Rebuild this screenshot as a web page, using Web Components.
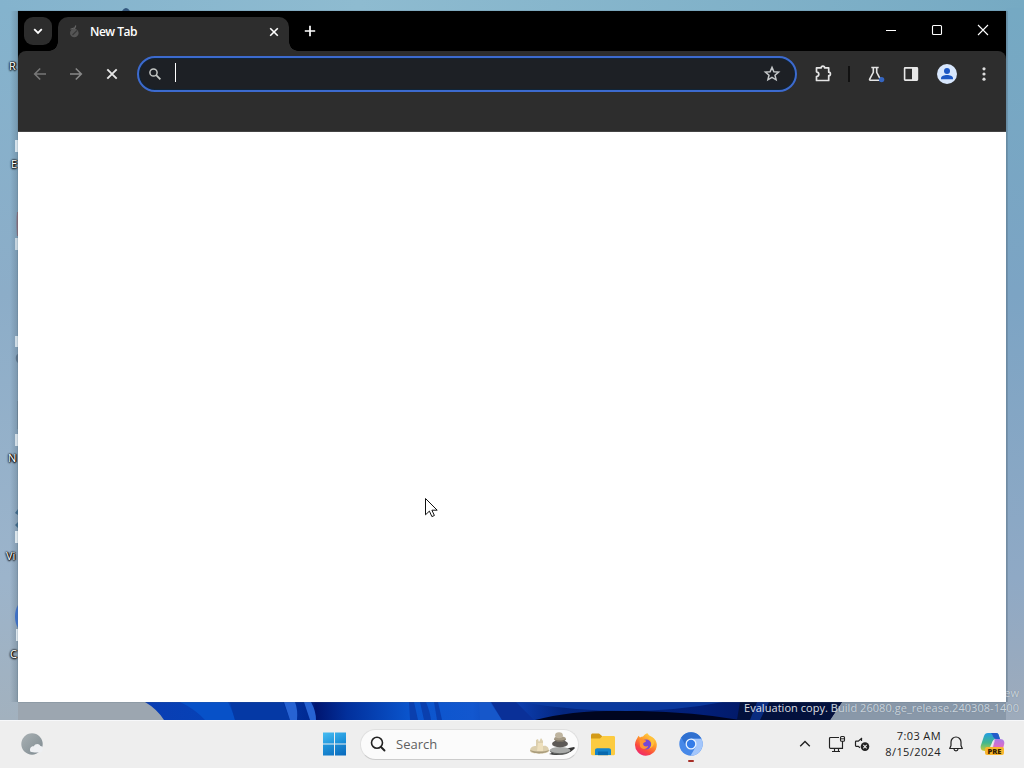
<!DOCTYPE html>
<html lang="en">
<head>
<meta charset="utf-8">
<title>Desktop</title>
<style>
	html, body {
		margin: 0;
		width: 1024px;
		height: 768px;
		overflow: hidden;
	}
	body {
		font-family: "Open Sans", "Noto Sans", sans-serif;
	}
</style>
</head>
<body>
<desktop-screen>
	<desktop-shortcut slot="shortcut" label="R" indent="9" icon="none"></desktop-shortcut>
	<desktop-shortcut slot="shortcut" label="E" indent="11" icon="plain"></desktop-shortcut>
	<desktop-shortcut slot="shortcut" indent="10" icon="red"></desktop-shortcut>
	<desktop-shortcut slot="shortcut" indent="10" icon="dark"></desktop-shortcut>
	<desktop-shortcut slot="shortcut" label="N" indent="8" icon="gray"></desktop-shortcut>
	<desktop-shortcut slot="shortcut" label="Vi" indent="6" icon="teal"></desktop-shortcut>
	<desktop-shortcut slot="shortcut" label="C" indent="10" icon="blue"></desktop-shortcut>
	<browser-window slot="window">
		<browser-tab slot="tab">New Tab</browser-tab>
		<browser-toolbar slot="toolbar"></browser-toolbar>
	</browser-window>
	<task-bar slot="taskbar">
		<task-search slot="apps">Search</task-search>
		<task-clock slot="tray" time="7:03 AM" date="8/15/2024"></task-clock>
	</task-bar>
</desktop-screen>

<script>
const icons = {
	chevronDown: { w: 12, h: 12, body: '<path d="M2.2 4.2 6 8l3.800-3.800" fill="none" stroke="#fff" stroke-width="1.800"/>' },
	pear: { w: 14, h: 16, body: '<circle cx="7.300" cy="9" r="4.300" fill="#555"/><path d="M7.500 5 8.800 1.500M3.500 5.200l5-1.700" stroke="#666" stroke-width="1.200"/><path d="M5.500 11 10 6.500" stroke="#383838" stroke-width="1.200"/>' },
	close: { w: 12, h: 12, body: '<path d="m2.200 2.200 7.600 7.600m0-7.600L2.200 9.800" stroke="#fff" stroke-width="1.600"/>' },
	plus: { w: 14, h: 14, body: '<path d="M7 1.800v10.400M1.800 7h10.400" stroke="#fff" stroke-width="1.700"/>' },
	minimize: { w: 12, h: 12, body: '<path d="M1 6.500h10" stroke="#fff"/>' },
	maximize: { w: 12, h: 12, body: '<rect x="1.500" y="1.500" width="9" height="9" rx="1" fill="none" stroke="#fff" stroke-width="1.100"/>' },
	winClose: { w: 12, h: 12, body: '<path d="m1 1 10 10M11 1 1 11" stroke="#fff" stroke-width="1.100"/>' },
	back: { w: 16, h: 16, body: '<path d="M14 8H3M8.200 2.500 2.700 8l5.500 5.500" fill="none" stroke="#777" stroke-width="1.600"/>' },
	forward: { w: 16, h: 16, body: '<path d="M2 8h11M7.800 2.500 13.300 8l-5.500 5.500" fill="none" stroke="#888" stroke-width="1.600"/>' },
	stop: { w: 16, h: 16, body: '<path d="m3.300 3.300 9.400 9.400m0-9.400-9.400 9.400" stroke="#e6e6e6" stroke-width="1.900"/>' },
	lens: { w: 14, h: 14, body: '<circle cx="5.500" cy="5.500" r="3.600" fill="none" stroke="#c4c7c5" stroke-width="1.500"/><path d="m8.200 8.200 4.200 4.200" stroke="#c4c7c5" stroke-width="1.800"/>' },
	star: { w: 18, h: 18, body: '<path d="m9 2.400 1.900 4.300 4.700.400-3.600 3.100 1.100 4.600L9 12.400l-4.100 2.400L6 10.200 2.400 7.100l4.700-.4z" fill="none" stroke="#c4c7c9" stroke-width="1.500"/>' },
	puzzle: { w: 20, h: 20, body: '<path d="M3.500 3.800h4.700c0-2.200 3.400-2.200 3.400 0h4.100v4.400c2.300 0 2.300 3.400 0 3.400v4.900H3.500v-4c3.100-.5 3.100-4.200 0-4.700z" fill="none" stroke="#e4e4e4" stroke-width="1.700" stroke-linejoin="round"/>' },
	flask: { w: 20, h: 20, body: '<path d="M5.300 3.500h7.400M7.300 3.700v4.600L3.700 15c-.3.700-.1 1.200.6 1.200h9.500c.6 0 .8-.5.500-1.200l-3.600-6.700V3.700" fill="none" stroke="#e4e4e4" stroke-width="1.600"/><circle cx="15.600" cy="15.600" r="2.700" fill="#3565c0"/>' },
	panel: { w: 16, h: 16, body: '<rect x="1.600" y="1.900" width="12.800" height="12.200" rx=".5" fill="none" stroke="#e8e8e8" stroke-width="1.600"/><path d="M9 2h5v12H9z" fill="#e8e8e8"/>' },
	profile: { w: 20, h: 20, body: '<circle cx="10" cy="10" r="10" fill="#d8e7fd"/><circle cx="10" cy="7" r="3" fill="#1c57c4"/><path d="M4 15.300v-1c0-2.200 3.300-3.300 6-3.300s6 1.100 6 3.300v1z" fill="#1c57c4"/>' },
	dots: { w: 4, h: 16, body: '<g fill="#ddd"><circle cx="2" cy="2.800" r="1.600"/><circle cx="2" cy="8" r="1.600"/><circle cx="2" cy="13.200" r="1.600"/></g>' },
	weather: { w: 24, h: 24, body: '<defs><linearGradient id="w" x1="0" y1="0" x2="1" y2="1"><stop stop-color="#a9b1b4"/><stop offset="1" stop-color="#7e8a90"/></linearGradient></defs><circle cx="12" cy="12" r="10.700" fill="url(#w)"/><path d="M10.500 19.800c-1.500-3 .5-6 3.400-5.500 1-3 5.400-3.300 6.500-.3 3.300 0 3.500 5.500.1 6.200-2 .5-7.500.6-10-.4z" fill="#eef0f3"/>' },
	start: { w: 24, h: 24, body: '<defs><linearGradient id="s" x1="0" y1="0" x2="1" y2="1"><stop stop-color="#48bdf2"/><stop offset="1" stop-color="#1287d4"/></linearGradient><linearGradient id="t" x1="0" y1="0" x2="1" y2="1"><stop stop-color="#2499dc"/><stop offset="1" stop-color="#0868bc"/></linearGradient></defs><path d="M0 .5h11v11H0zM12 .5h11v11H12z" fill="url(#s)"/><path d="M0 12.500h11v11H0zM12 12.500h11v11H12z" fill="url(#t)"/>' },
	search: { w: 18, h: 18, body: '<circle cx="8" cy="7.800" r="5.500" fill="none" stroke="#222" stroke-width="1.600"/><path d="m12 12 3.500 3.500" stroke="#222" stroke-width="1.900" stroke-linecap="round"/>' },
	stones: { w: 48, h: 26, body: '<path d="M20 23c8 2 20 1 26-6l-1-1-10 2z" fill="#333"/><path d="M1 20c0-4 3-5 6-5V9l2-1 1 3 2-4 2 3v5c4-1 6 2 6 5 0 3-18 4-19 0z" fill="#dccfae"/><path d="M9 12h5v8H8z" fill="#eee0bd"/><path d="M1 19c6 2 14 2 19 0-1 4-17 5-19 0z" fill="#a99c7c"/><ellipse cx="31" cy="19.500" rx="10.500" ry="3.500" fill="#a9aba9"/><path d="M21 20c5 3 15 3 20 0-1 5-18 5-20 0z" fill="#5f615f"/><ellipse cx="31" cy="12.700" rx="8" ry="3.600" fill="#5c5956"/><ellipse cx="31" cy="8" rx="6" ry="2.700" fill="#a49984"/><ellipse cx="30" cy="4.200" rx="3.900" ry="3" fill="#beb49f"/><path d="M25 8c3 2 8 2 12 0-1 4-10 4-12 0z" fill="#746d61"/>' },
	folder: { w: 26, h: 24, body: '<path d="M1 4c0-2 .5-2.500 2-2.500h6L12 4v4H1z" fill="#d39a18"/><path d="M1 6.500h9l2.500-2.500h11c1 0 1.500.5 1.500 1.500V22c0 .7-.5 1.200-1.200 1.200H2.200C1.500 23.200 1 22.700 1 22z" fill="#fccb40"/><path d="M5 23v-4.500c0-1.500.8-2.300 2.300-2.300h11.500c1.400 0 2.200.8 2.200 2.300V23z" fill="#1684c9"/><path d="M8 19.500h10v3.700H8z" fill="#0768ad"/>' },
	firefox: { w: 24, h: 24, body: '<defs><linearGradient id="f" x1=".85" y1="0" x2=".25" y2="1"><stop stop-color="#ffe24b"/><stop offset=".4" stop-color="#ff9a2b"/><stop offset=".72" stop-color="#fb4a3d"/><stop offset="1" stop-color="#ec2475"/></linearGradient></defs><path d="M4.500 3.700 6 5.500c1-.7 2-1 3-1.100 1.600-2.300 4-3.200 4-3.200 1.300 0 1 1.500 2.800 2.500 4.400 2 7.300 5.300 7 9.500A10.900 10.900 0 0 1 1 12.500C1 9 3 7 4.500 3.700z" fill="url(#f)"/><circle cx="12.200" cy="12.500" r="5" fill="#7547d4"/><path d="M5.500 8c2-1 4 0 5.500.2 1.400.2 1.600 1.200.2 1.900-1.500.8-2.300 1.300-2 2.500.5 2 3.500 2.400 5 1.200-1 4-6.500 4.500-8.200.5z" fill="#ff9331"/><path d="M14 6c4 2 4.500 8 1 10.500 5-1 6.500-7 3.500-11z" fill="#ffc13a"/>' },
	chromium: { w: 24, h: 24, body: '<circle cx="12" cy="12" r="11.700" fill="#4688e8"/><path d="M12 6.500h10.300A11.700 11.700 0 0 1 11.500 23.700L16.800 14.700z" fill="#a3c6fb"/><path d="M2.200 5.500A11.700 11.700 0 0 1 22.300 6.500H12L7.200 14.500z" fill="#2f70d0"/><circle cx="12" cy="12" r="5.500" fill="#e9f3ff"/><circle cx="12" cy="12" r="4.200" fill="#347ce8"/>' },
	chevronUp: { w: 12, h: 12, body: '<path d="M1.200 8.300 6 3.500l4.800 4.800" fill="none" stroke="#222" stroke-width="1.400"/>' },
	monitor: { w: 18, h: 18, body: '<path d="M11 2.500H2.500c-.7 0-1 .3-1 1v8.800c0 .6.400 1 1 1h12V8.500M6.500 13.500v3m4-3v3M4 16.500h8M14.500 6v3" fill="none" stroke="#222" stroke-width="1.150"/><rect x="12.500" y="1.500" width="4" height="4.800" rx="1" fill="none" stroke="#222" stroke-width="1.100"/><path d="M12.500 3.800h4" stroke="#222"/>' },
	muted: { w: 16, h: 16, body: '<path d="M7.500 2v3M8 2 4.300 5.200H2.200c-.5 0-.7.3-.7.700v3.700c0 .4.300.7.700.7h2.100l1.700 1.400" fill="none" stroke="#222" stroke-width="1.200"/><circle cx="11" cy="10.600" r="4.300" fill="#222"/><path d="m9.300 8.900 3.400 3.400m0-3.400-3.400 3.400" stroke="#eee" stroke-width="1.100"/>' },
	bell: { w: 16, h: 18, body: '<path d="M8 2a5 5 0 0 0-5 5v3.500l-1.300 3h12.600l-1.300-3V7a5 5 0 0 0-5-5zM6 14c.2 2.500 3.800 2.500 4 0" fill="none" stroke="#222" stroke-width="1.200" stroke-linejoin="round"/>' }
};

class UiIcon extends HTMLElement {
	constructor() {
		super();
		this.attachShadow({ mode: 'open' });
	}

	connectedCallback() {
		const icon = icons[this.getAttribute('name')];
		this.shadowRoot.innerHTML = `
		<style>
		:host { display: block; flex: none; width: ${icon.w}px; height: ${icon.h}px; }
		svg { display: block; }
		</style>
		<svg width="${icon.w}" height="${icon.h}" viewBox="0 0 ${icon.w} ${icon.h}">${icon.body}</svg>
		`;
	}
}
customElements.define('ui-icon', UiIcon);

class DesktopShortcut extends HTMLElement {
	constructor() {
		super();
		this.attachShadow({ mode: 'open' });
	}

	connectedCallback() {
		const slivers = {
			none: '',
			plain: '<path d="M15 48h3v12h-3z" fill="#d5e2eb"/>',
			red: '<path d="M17 22q-1 10 0 24h1V22z" fill="#876a78"/><path d="M15 48h3v12h-3z" fill="#c6d4de"/>',
			dark: '<path d="M15 48h3v11h-3z" fill="#cfdce5"/><path d="M18 66c-3 1-3 7 0 9z" fill="#5b7187"/>',
			gray: '<path d="M17 15h1v28h-1z" fill="#70879a"/><path d="M15 48h3v12h-3z" fill="#d3dee6"/>',
			teal: '<path d="M18 25l-3 4 3 2zM18 38l-3 3 3 3z" fill="#3c6585"/><path d="M15 47h3v12h-3z" fill="#dbe5eb"/>',
			blue: '<path d="M18 23c-4 6-4 17 0 23z" fill="#3e70c6"/><path d="M16 47h2v12h-2z" fill="#dce6ed"/>'
		};
		this.shadowRoot.innerHTML = `
		<style>
		:host { display: flex; flex-direction: column; height: 98px; width: 60px; }
		svg { display: block; height: 64px; width: 18px; overflow: visible; flex: none; }
		span {
			padding-left: ${this.getAttribute('indent')}px;
			font-size: 11px;
			line-height: 16px;
			color: #fff;
			text-shadow: 0 0 2px #000, 0 0 2px #000, 0 1px 2px #000, 1px 0 1px #000;
		}
		</style>
		<svg>${slivers[this.getAttribute('icon')]}</svg>
		<span>${this.getAttribute('label') || ''}</span>
		`;
	}
}
customElements.define('desktop-shortcut', DesktopShortcut);

class DesktopScreen extends HTMLElement {
	constructor() {
		super();
		this.attachShadow({ mode: 'open' });
		this.shadowRoot.innerHTML = `
		<style>
		:host {
			display: grid;
			grid-template-rows: 720px 48px;
			width: 1024px;
			height: 768px;
			position: relative;
			overflow: hidden;
		}
		.wallpaper {
			position: relative;
			overflow: hidden;
			background: linear-gradient(90deg, #84b3cd, #8ebbd0 35%, #76aac3);
		}
		.wallpaper > svg { position: absolute; left: 0; top: 0; }
		.shortcuts { position: absolute; left: 0; top: -6px; }
		.window { position: absolute; left: 18px; top: 11px; }
		.watermark {
			position: absolute;
			right: 5px;
			bottom: 5px;
			text-align: right;
			font-size: 11px;
			line-height: 15px;
			color: #fffd;
			white-space: nowrap;
			letter-spacing: .04px;
		}
		.watermark .dim { color: #dce3ebd9; text-shadow: 0 0 1px #6b7b8a; }
		.wallpaper > .pointer { left: 424px; top: 497px; }
		</style>
		<div class="wallpaper">
			<svg width="1024" height="720">
				<defs>
					<linearGradient id="left" x1="0" y1="0" x2="0" y2="1">
						<stop stop-color="#84b3cd"/><stop offset=".4" stop-color="#8cadc8"/><stop offset=".8" stop-color="#9cb4cb"/><stop offset="1" stop-color="#a2b1be"/>
					</linearGradient>
					<linearGradient id="right" x1="0" y1="0" x2="0" y2="1">
						<stop stop-color="#75a9c3"/><stop offset=".4" stop-color="#7ca4c4"/><stop offset=".8" stop-color="#8fa9c5"/><stop offset="1" stop-color="#9eabbb"/>
					</linearGradient>
					<linearGradient id="shade"><stop stop-color="#526878" stop-opacity="0"/><stop offset="1" stop-color="#526878" stop-opacity=".35"/></linearGradient>
					<linearGradient id="bloom" gradientUnits="userSpaceOnUse" x1="145" y1="0" x2="842" y2="0">
						<stop stop-color="#0a3eb3"/><stop offset=".12" stop-color="#0542b7"/><stop offset=".235" stop-color="#002a93"/><stop offset=".245" stop-color="#001570"/><stop offset=".29" stop-color="#02309c"/><stop offset=".38" stop-color="#0a55cd"/><stop offset=".47" stop-color="#1257cf"/><stop offset=".54" stop-color="#0b3cab"/><stop offset=".6" stop-color="#04267f"/><stop offset=".8" stop-color="#021f78"/><stop offset="1" stop-color="#020d43"/>
					</linearGradient>
				</defs>
				<path d="M0 8h18v712H0z" fill="url(#left)"/>
				<path d="M1006 8h18v712h-18z" fill="url(#right)"/>
				<path d="M10 11h8v691h-8z" fill="url(#shade)"/>
				<path d="M1006 11h2v691h-2z" fill="#526878" opacity=".3"/>
				<path d="M18 702h180v18H18z" fill="#9ca6b0"/>
				<path d="M800 702h206v18H800z" fill="#8998a9"/>
				<path d="M122 11q4-6 8 0z" fill="#31557c"/>
				<path d="M145 702h697l-12 18H164q-7-11-19-18z" fill="url(#bloom)"/>
				<path d="M180 702h48q5 10 7 18h-30q-10-11-25-18z" fill="#0751c8"/>
				<path d="M230 702h53l7 18h-55z" fill="#0539a5"/>
				<path d="M284 702h11q3 8 2 18h-7zM304 702h7q5 9 5 18h-6z" fill="#2763d3"/>
				<path d="M409 702h5l4 18h-8zM420 702h6q4 10 5 18h-7z" fill="#0a3fae"/>
				<path d="M434 702h4l4 18h-5z" fill="#0a3fae"/>
				<path d="M479 702h11l12 18h-22z" fill="#1657ca"/>
				<path d="M491 702h25l18 18h-32z" fill="#0a3098"/>
				<path d="M535 720q40-11 104-9 55 1 101 9z" fill="#00051f"/>
				<path d="M519 702h204q-92 18-204 0z" fill="#0c3ea6" opacity=".8"/>
				<path d="M740 702h102l-12 18h-93z" fill="#03113d"/>
				<path d="M757 702h12l-9 18h-10z" fill="#0a2c80"/>
			</svg>
			<div class="shortcuts"><slot name="shortcut"></slot></div>
			<div class="watermark">
				<div class="dim">ew</div>
				<div>Evaluation copy. <span class="dim">Build 26080.ge_release.240308-1400</span></div>
			</div>
			<div class="window"><slot name="window"></slot></div>
			<svg class="pointer" width="15" height="22"><path d="M1.500 1.500v16.300l3.900-3.700 2.500 5.500 2.500-1.100-2.500-5.300h5.300z" fill="#fff" stroke="#111"/></svg>
		</div>
		<slot name="taskbar"></slot>
		`;
	}
}
customElements.define('desktop-screen', DesktopScreen);

class BrowserWindow extends HTMLElement {
	constructor() {
		super();
		this.attachShadow({ mode: 'open' });
		this.shadowRoot.innerHTML = `
		<style>
		:host {
			display: grid;
			grid-template-rows: 40px 81px 1fr;
			width: 988px;
			height: 691px;
			background: #fff;
			box-shadow: 0 0 1px #4e6475;
		}
		.titlebar { display: flex; align-items: center; background: #000; }
		.list {
			display: flex;
			align-items: center;
			justify-content: center;
			width: 28px;
			height: 28px;
			margin: 0 6px;
			border-radius: 9px;
			background: #2c2c2c;
		}
		.plus { margin-left: 14px; }
		.controls { display: flex; gap: 34px; margin-left: auto; padding: 0 17px 2px 0; }
		.tools { background: #000; }
		</style>
		<div class="titlebar">
			<div class="list"><ui-icon name="chevronDown"></ui-icon></div>
			<slot name="tab"></slot>
			<ui-icon class="plus" name="plus"></ui-icon>
			<div class="controls">
				<ui-icon name="minimize"></ui-icon>
				<ui-icon name="maximize"></ui-icon>
				<ui-icon name="winClose"></ui-icon>
			</div>
		</div>
		<div class="tools"><slot name="toolbar"></slot></div>
		`;
	}
}
customElements.define('browser-window', BrowserWindow);

class BrowserTab extends HTMLElement {
	constructor() {
		super();
		this.attachShadow({ mode: 'open' });
		this.shadowRoot.innerHTML = `
		<style>
		:host {
			display: flex;
			align-items: center;
			align-self: flex-end;
			box-sizing: border-box;
			position: relative;
			width: 231px;
			height: 34px;
			padding: 0 9px 5px;
			border-radius: 10px 10px 0 0;
			background: #2d2d2d;
			color: #fff;
			font-size: 12px;
			font-weight: 600;
			letter-spacing: -.5px;
		}
		:host::before, :host::after {
			content: "";
			position: absolute;
			bottom: 0;
			width: 9px;
			height: 9px;
		}
		:host::before { left: -9px; background: radial-gradient(circle at 0 0, #0000 8.5px, #2d2d2d 9px); }
		:host::after { right: -9px; background: radial-gradient(circle at 100% 0, #0000 8.5px, #2d2d2d 9px); }
		span { margin-left: 9px; line-height: 18px; }
		.close { margin-left: auto; }
		</style>
		<ui-icon name="pear"></ui-icon>
		<span><slot></slot></span>
		<ui-icon class="close" name="close"></ui-icon>
		`;
	}
}
customElements.define('browser-tab', BrowserTab);

class BrowserToolbar extends HTMLElement {
	constructor() {
		super();
		this.attachShadow({ mode: 'open' });
		this.shadowRoot.innerHTML = `
		<style>
		:host {
			display: flex;
			align-items: flex-start;
			box-sizing: border-box;
			height: 81px;
			padding: 5px 20px 0 14px;
			border-radius: 8px 8px 0 0;
			border-bottom: 1px solid #444;
			background: #2d2d2d;
		}
		.row { display: flex; align-items: center; width: 100%; height: 36px; }
		.nav { display: flex; gap: 20px; width: 105px; }
		.address {
			display: flex;
			align-items: center;
			box-sizing: border-box;
			width: 660px;
			height: 36px;
			padding: 0 14px 0 9px;
			border: 2px solid #3c6ace;
			border-radius: 18px;
			background: #1d2025;
			box-shadow: inset 0 0 0 1px #102539;
		}
		.caret { width: 1px; height: 19px; margin: 0 auto 3px 13px; background: #fff; }
		.actions { display: flex; align-items: center; margin-left: 16px; flex: 1; }
		.line { width: 2px; height: 16px; margin: 0 16px 0 15px; background: #111; }
		.panel { margin: 0 18px 0 17px; }
		.dots { margin-left: auto; }
		</style>
		<div class="row">
			<div class="nav">
				<ui-icon name="back"></ui-icon>
				<ui-icon name="forward"></ui-icon>
				<ui-icon name="stop"></ui-icon>
			</div>
			<div class="address">
				<ui-icon name="lens"></ui-icon>
				<div class="caret"></div>
				<ui-icon name="star"></ui-icon>
			</div>
			<div class="actions">
				<ui-icon name="puzzle"></ui-icon>
				<div class="line"></div>
				<ui-icon name="flask"></ui-icon>
				<ui-icon class="panel" name="panel"></ui-icon>
				<ui-icon name="profile"></ui-icon>
				<ui-icon class="dots" name="dots"></ui-icon>
			</div>
		</div>
		`;
	}
}
customElements.define('browser-toolbar', BrowserToolbar);

class TaskSearch extends HTMLElement {
	constructor() {
		super();
		this.attachShadow({ mode: 'open' });
		this.shadowRoot.innerHTML = `
		<style>
		:host {
			display: flex;
			align-items: center;
			box-sizing: border-box;
			width: 219px;
			height: 31px;
			padding: 0 1px 0 8px;
			border: 1px solid #e0e0e0;
			border-bottom-color: #ccc;
			border-radius: 16px;
			background: #fbfbfb;
			color: #606060;
			font-size: 13px;
		}
		span { margin-left: 9px; flex: 1; }
		</style>
		<ui-icon name="search"></ui-icon>
		<span><slot></slot></span>
		<ui-icon name="stones"></ui-icon>
		`;
	}
}
customElements.define('task-search', TaskSearch);

class TaskClock extends HTMLElement {
	constructor() {
		super();
		this.attachShadow({ mode: 'open' });
	}

	connectedCallback() {
		this.shadowRoot.innerHTML = `
		<style>
		:host {
			display: flex;
			flex-direction: column;
			width: 71px;
			text-align: right;
			font-size: 11px;
			letter-spacing: .4px;
			line-height: 16px;
			color: #222;
			white-space: nowrap;
		}
		</style>
		<span>${this.getAttribute('time')}</span>
		<span>${this.getAttribute('date')}</span>
		`;
	}
}
customElements.define('task-clock', TaskClock);

class CopilotBadge extends HTMLElement {
	constructor() {
		super();
		this.attachShadow({ mode: 'open' });
		this.shadowRoot.innerHTML = `
		<style>
		:host { display: block; position: relative; width: 25px; height: 24px; }
		svg { display: block; }
		span {
			position: absolute;
			left: 5px;
			top: 15px;
			width: 19px;
			height: 8px;
			border-radius: 2px;
			background: #f8b62d;
			color: #312000;
			font-size: 7.5px;
			font-weight: 800;
			line-height: 8px;
			text-align: center;
		}
		</style>
		<svg width="25" height="24" viewBox="0 0 25 24">
			<defs>
				<linearGradient id="a" x1="0" y1="0" x2="0" y2="1"><stop stop-color="#229ce3"/><stop offset=".55" stop-color="#43b88d"/><stop offset="1" stop-color="#c9cb38"/></linearGradient>
				<linearGradient id="b" x1="0" y1="0" x2="0" y2="1"><stop stop-color="#a77be8"/><stop offset=".5" stop-color="#e06cc4"/><stop offset="1" stop-color="#f48353"/></linearGradient>
			</defs>
			<path d="M8 1h8c2 0 2.500 1 3 3l1 3h-4c-2 0-3 1-3.500 3l-2 7c-.5 1.500-1 2-2.500 2H5c-4 0-5-3-4-6L4 4c.7-2 1.800-3 4-3z" fill="url(#a)"/>
			<path d="M11 1h5c2 0 2.500 1 3 3l1 3h-4c-2-.5-3-2-3.500-4z" fill="#235cc9"/>
			<path d="M16 7h4c4 0 5 3 4 6l-2 7c-.7 2-2 3-4 3h-8c-2 0-3-1-3-3 3 0 4-1 4.500-3l2-7c.5-2 1-3 2.500-3z" fill="url(#b)"/>
			<path d="m12.500 9.500 2.500-1.500-2 7h-3z" fill="#eee" opacity=".8"/>
		</svg>
		<span>PRE</span>
		`;
	}
}
customElements.define('copilot-badge', CopilotBadge);

class TaskBar extends HTMLElement {
	constructor() {
		super();
		this.attachShadow({ mode: 'open' });
		this.shadowRoot.innerHTML = `
		<style>
		:host {
			display: grid;
			grid-template-columns: 302px 1fr auto;
			align-items: center;
			box-sizing: border-box;
			height: 48px;
			padding: 0 19px 1px 20px;
			border-top: 1px solid #f7f8fa;
			background: #eee;
		}
		.apps { display: flex; align-items: center; height: 46px; }
		.start { margin: 0 13px 0 1px; }
		.folder { margin-left: 11px; }
		.firefox { margin-left: 18px; }
		.running {
			display: flex;
			flex-direction: column;
			align-items: center;
			gap: 4px;
			margin: 6px 0 0 21px;
		}
		.running i { width: 6px; height: 2px; border-radius: 1px; background: #a72f27; }
		.tray { display: flex; align-items: center; }
		.monitor { margin-left: 17px; }
		.muted { margin-left: 8px; }
		.bell { margin: 0 16px 0 7px; }
		</style>
		<ui-icon name="weather"></ui-icon>
		<div class="apps">
			<ui-icon class="start" name="start"></ui-icon>
			<slot name="apps"></slot>
			<ui-icon class="folder" name="folder"></ui-icon>
			<ui-icon class="firefox" name="firefox"></ui-icon>
			<div class="running"><ui-icon name="chromium"></ui-icon><i></i></div>
		</div>
		<div class="tray">
			<ui-icon name="chevronUp"></ui-icon>
			<ui-icon class="monitor" name="monitor"></ui-icon>
			<ui-icon class="muted" name="muted"></ui-icon>
			<slot name="tray"></slot>
			<ui-icon class="bell" name="bell"></ui-icon>
			<copilot-badge></copilot-badge>
		</div>
		`;
	}
}
customElements.define('task-bar', TaskBar);
</script>
</body>
</html>
